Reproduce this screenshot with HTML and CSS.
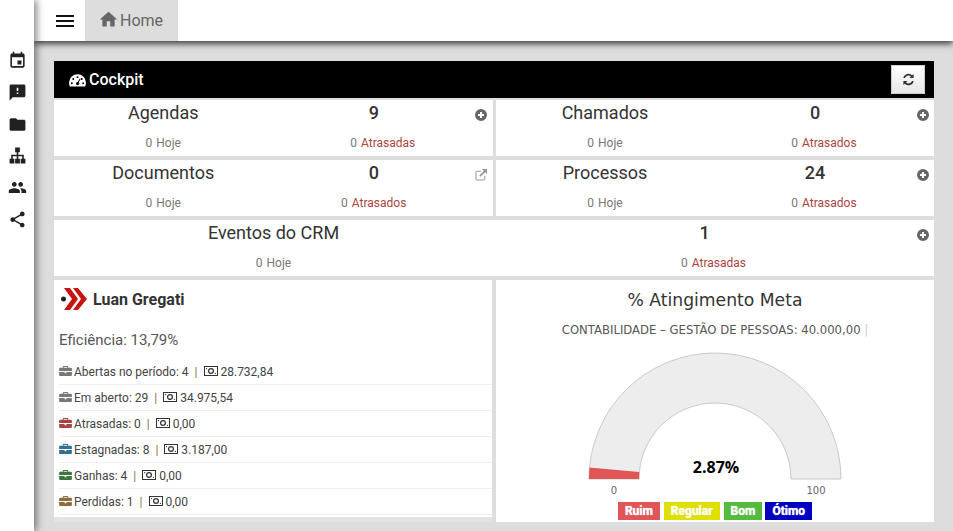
FILE: index.html
```html
<!DOCTYPE html>
<html lang="pt-BR">
<head>
    <meta charset="UTF-8">
    <meta name="viewport" content="width=device-width, initial-scale=1.0">
    <title>Cockpit</title>
    <link rel="stylesheet" href="styles.css">
</head>
<body>
    <svg class="defs" width="0" height="0">
        <symbol id="case" viewBox="0 0 14 11"><path d="M5 0h4a1 1 0 0 1 1 1v1h3a1 1 0 0 1 1 1v2.500H0V3a1 1 0 0 1 1-1h3V1a1 1 0 0 1 1-1zm0 1v1h4V1zM0 6.500h6V8h2V6.500h6V10a1 1 0 0 1-1 1H1a1 1 0 0 1-1-1z"/></symbol>
        <symbol id="money" viewBox="0 0 14 10"><path fill-rule="evenodd" d="M0 0h14v10H0zM1 1v8h12V1zM7 2a3 3 0 1 1 0 6 3 3 0 0 1 0-6zM7 3.200a1.800 1.800 0 1 0 0 3.600 1.800 1.800 0 0 0 0-3.600zM2 2h1.500L2 3.500zM12 8h-1.500L12 6.500z"/></symbol>
        <symbol id="plus" viewBox="0 0 12 12"><path fill-rule="evenodd" d="M6 0a6 6 0 1 1 0 12A6 6 0 0 1 6 0zM5 3v2H3v2h2v2h2V7h2V5H7V3z"/></symbol>
    </svg>

    <aside class="sidebar">
        <svg viewBox="0 0 24 24"><path d="M17 12h-5v5h5v-5zM16 1v2H8V1H6v2H5c-1.110 0-1.990.9-1.990 2L3 19c0 1.100.89 2 2 2h14c1.100 0 2-.9 2-2V5c0-1.100-.9-2-2-2h-1V1h-2zm3 18H5V8h14v11z"/></svg>
        <svg viewBox="0 0 24 24"><path d="M20 2H4c-1.100 0-1.990.9-1.990 2L2 22l4-4h14c1.100 0 2-.9 2-2V4c0-1.100-.9-2-2-2zm-7 12h-2v-2h2v2zm0-4h-2V6h2v4z"/></svg>
        <svg viewBox="0 0 24 24"><path d="M10 4H4c-1.100 0-1.990.9-1.990 2L2 18c0 1.100.9 2 2 2h16c1.100 0 2-.9 2-2V8c0-1.100-.9-2-2-2h-8l-2-2z"/></svg>
        <svg viewBox="0 0 24 24"><path d="M9 2h6v6h-2v3h7v5h2v6h-6v-6h2v-3h-5v3h2v6H9v-6h2v-3H6v3h2v6H2v-6h2v-5h7V8H9z"/></svg>
        <svg viewBox="0 0 24 24"><path d="M16 11c1.660 0 2.990-1.340 2.990-3S17.660 5 16 5c-1.660 0-3 1.340-3 3s1.340 3 3 3zm-8 0c1.660 0 2.990-1.340 2.990-3S9.660 5 8 5C6.340 5 5 6.340 5 8s1.340 3 3 3zm0 2c-2.330 0-7 1.170-7 3.500V19h14v-2.500c0-2.330-4.670-3.500-7-3.500zm8 0c-.29 0-.62.02-.97.05 1.160.84 1.970 1.970 1.970 3.450V19h6v-2.500c0-2.330-4.670-3.500-7-3.500z"/></svg>
        <svg viewBox="0 0 24 24"><path d="M18 16.080c-.76 0-1.440.3-1.960.77L8.910 12.700c.05-.23.09-.46.09-.7s-.04-.47-.09-.7l7.050-4.110c.54.5 1.250.81 2.040.81 1.660 0 3-1.340 3-3s-1.340-3-3-3-3 1.340-3 3c0 .24.04.47.09.7L8.040 9.810C7.500 9.310 6.790 9 6 9c-1.660 0-3 1.340-3 3s1.340 3 3 3c.79 0 1.500-.31 2.040-.81l7.120 4.160c-.05.21-.08.43-.08.65 0 1.610 1.310 2.920 2.920 2.920 1.610 0 2.920-1.310 2.920-2.920s-1.310-2.920-2.920-2.920z"/></svg>
    </aside>

    <div class="main">
        <header class="topbar">
            <div class="burger"><span></span><span></span><span></span></div>
            <div class="tab">
                <svg viewBox="0 0 24 24"><path d="M10 20v-6h4v6h5v-8h3L12 3 2 12h3v8z"/></svg>Home
            </div>
        </header>

        <main class="content">
            <div class="cockpit-head">
                <h1>
                    <svg viewBox="0 0 18 14"><path fill-rule="evenodd" d="M9 1a9 9 0 0 1 9 9c0 1.500-.4 2.900-1 4H1c-.6-1.100-1-2.500-1-4a9 9 0 0 1 9-9zM9 3a1 1 0 1 0 0 2 1 1 0 0 0 0-2zM4.500 5a1 1 0 1 0 0 2 1 1 0 0 0 0-2zM13.500 5a1 1 0 1 0 0 2 1 1 0 0 0 0-2zM3 9.500a1 1 0 1 0 0 2 1 1 0 0 0 0-2zM15 9.500a1 1 0 1 0 0 2 1 1 0 0 0 0-2zM11.500 5.500L9.300 9a1.700 1.700 0 1 0 1 .4l2-3.500z"/></svg>
                    Cockpit
                </h1>
                <button class="refresh">
                    <svg viewBox="0 0 14 14"><path d="M12.500 1v4.500H8l1.700-1.700A4 4 0 0 0 3.200 5.500H1.300A5.800 5.800 0 0 1 11 2.500zM1.500 13V8.500H6l-1.700 1.700a4 4 0 0 0 6.500-1.700h1.900A5.800 5.800 0 0 1 3 11.500z"/></svg>
                </button>
            </div>

            <div class="cards">
                <section class="card">
                    <div class="card-col"><div class="card-title">Agendas</div><div class="card-sub">0 Hoje</div></div>
                    <div class="card-col"><div class="card-num">9</div><div class="card-sub late shift">0 <span>Atrasadas</span></div></div>
                    <svg class="card-icon"><use href="#plus"/></svg>
                </section>
                <section class="card end">
                    <div class="card-col"><div class="card-title">Chamados</div><div class="card-sub">0 Hoje</div></div>
                    <div class="card-col"><div class="card-num">0</div><div class="card-sub late shift">0 <span>Atrasados</span></div></div>
                    <svg class="card-icon"><use href="#plus"/></svg>
                </section>
                <section class="card">
                    <div class="card-col"><div class="card-title">Documentos</div><div class="card-sub">0 Hoje</div></div>
                    <div class="card-col"><div class="card-num">0</div><div class="card-sub late">0 <span>Atrasados</span></div></div>
                    <svg class="card-icon ext" viewBox="0 0 14 14"><path d="M2.500 2H7v1.300H2.500a.8.8 0 0 0-.8.8v7.400c0 .4.4.8.8.8H10c.4 0 .8-.4.8-.8V8H12v3.500a2 2 0 0 1-2 2H2.500a2 2 0 0 1-2-2V4a2 2 0 0 1 2-2zM8 0h6v6l-2.200-2.200-5.300 5.300-1.600-1.600 5.300-5.300z"/></svg>
                </section>
                <section class="card end">
                    <div class="card-col"><div class="card-title">Processos</div><div class="card-sub">0 Hoje</div></div>
                    <div class="card-col"><div class="card-num">24</div><div class="card-sub late shift">0 <span>Atrasados</span></div></div>
                    <svg class="card-icon"><use href="#plus"/></svg>
                </section>
                <section class="card wide end">
                    <div class="card-col"><div class="card-title">Eventos do CRM</div><div class="card-sub">0 Hoje</div></div>
                    <div class="card-col"><div class="card-num">1</div><div class="card-sub late shift">0 <span>Atrasadas</span></div></div>
                    <svg class="card-icon"><use href="#plus"/></svg>
                </section>

                <section class="panel user">
                    <div class="user-name">
                        <svg viewBox="0 0 26 22"><circle cx="2.500" cy="11" r="2.500" fill="#222"/><path fill="#c8140f" d="M3 0h6l8 11-8 11H3l8-11zM12 0h5l9 11-9 11h-5l8-11z"/></svg>
                        Luan Gregati
                    </div>
                    <div class="efficiency">Eficiência: 13,79%</div>
                    <ul class="stats">
                        <li><svg class="case grey"><use href="#case"/></svg>Abertas no período: 4 <i>|</i> <svg class="money"><use href="#money"/></svg> 28.732,84</li>
                        <li><svg class="case grey"><use href="#case"/></svg>Em aberto: 29 <i>|</i> <svg class="money"><use href="#money"/></svg> 34.975,54</li>
                        <li><svg class="case red"><use href="#case"/></svg>Atrasadas: 0 <i>|</i> <svg class="money"><use href="#money"/></svg> 0,00</li>
                        <li><svg class="case blue"><use href="#case"/></svg>Estagnadas: 8 <i>|</i> <svg class="money"><use href="#money"/></svg> 3.187,00</li>
                        <li><svg class="case green"><use href="#case"/></svg>Ganhas: 4 <i>|</i> <svg class="money"><use href="#money"/></svg> 0,00</li>
                        <li><svg class="case brown"><use href="#case"/></svg>Perdidas: 1 <i>|</i> <svg class="money"><use href="#money"/></svg> 0,00</li>
                    </ul>
                </section>

                <section class="panel goal">
                    <h2>% Atingimento Meta</h2>
                    <p class="goal-sub">CONTABILIDADE – GESTÃO DE PESSOAS: 40.000,00 <span>|</span></p>
                    <svg class="gauge" viewBox="0 0 270 147" width="270" height="147">
                        <path d="M9 130A126 126 0 0 1 261 130H211A76 76 0 0 0 59 130z" fill="#ededed" stroke="#c9c9c9"/>
                        <path d="M9 130A126 126 0 0 1 9.500 118.600L59.300 123.100A76 76 0 0 0 59 130z" fill="#e05555"/>
                        <path d="M251 130h10" stroke="#cfe0f0"/>
                        <text class="gauge-val" x="136" y="124">2.87%</text>
                        <text class="gauge-lim" x="34" y="145">0</text>
                        <text class="gauge-lim" x="236" y="145">100</text>
                    </svg>
                    <div class="legend">
                        <span class="ruim">Ruim</span><span class="regular">Regular</span><span class="bom">Bom</span><span class="otimo">Ótimo</span>
                    </div>
                </section>
            </div>
        </main>
    </div>
</body>
</html>
```

FILE: styles.css
```css
* { box-sizing: border-box; }
html, body { height: 100%; }
body { margin: 0; display: flex; height: 531px; overflow: hidden; font-family: Roboto, sans-serif; color: #333; background: #ddd; }
.defs { position: absolute; }

.sidebar { width: 34px; flex: none; background: #fff; padding-top: 51px; display: flex; flex-direction: column; align-items: center; gap: 12.800px; box-shadow: 3px 0 7px rgba(0,0,0,.45); z-index: 2; }
.sidebar svg { width: 19px; height: 19px; fill: #212121; }

.main { flex: 1; min-width: 0; display: flex; flex-direction: column; }
.topbar { height: 41px; flex: none; background: #fff; display: flex; box-shadow: 0 3px 6px rgba(0,0,0,.7); z-index: 1; }
.burger { width: 51px; display: flex; flex-direction: column; gap: 3px; justify-content: center; padding-left: 22px; }
.burger span { width: 18px; height: 2px; background: #111; }
.tab { width: 93px; background: #ddd; color: #666; font-size: 16px; display: flex; align-items: center; padding-left: 14px; }
.tab svg { width: 21px; height: 21px; fill: #666; margin-right: 1px; margin-top: -3px; margin-left: -1px; }

.content { padding: 20px 19px 0 20px; }
.cockpit-head { height: 37px; background: #000; color: #fff; display: flex; align-items: center; justify-content: space-between; padding: 0 9px 0 15px; margin-bottom: 2px; }
.cockpit-head h1 { margin: 0; font-size: 16px; font-weight: 500; display: flex; align-items: center; gap: 3px; }
.cockpit-head h1 svg { width: 17px; height: 14px; fill: #fff; }
.refresh { width: 34px; height: 29px; padding: 0; background: linear-gradient(#fff, #e6e6e6); border: 1px solid #ccc; display: flex; align-items: center; justify-content: center; }
.refresh svg { width: 13px; height: 13px; fill: #333; }

.cards { display: grid; grid-template-columns: 439px 438px; gap: 4px 3px; }
.card { position: relative; height: 56px; background: #fff; display: grid; grid-template-columns: 1fr 1fr; padding: 1px 14px 0 4px; }
.card.wide { grid-column: 1 / 3; }
.card-col { text-align: center; }
.card-title { font-size: 18px; line-height: 24px; color: #333; }
.card-num { font-size: 18px; line-height: 24px; font-weight: 500; }
.card-sub { font-size: 12px; line-height: 14px; margin-top: 11px; color: #777; word-spacing: 1px; }
.late { color: #777; }
.late span { color: #a94442; }
.shift { padding-left: 18px; }
.card-icon { position: absolute; right: 6px; top: 9px; width: 12px; height: 12px; fill: #666; }
.end .card-icon { right: 5px; }
.card-icon.ext { fill: #999; }

.panel { background: #fff; height: 242px; }
.user { height: 237px; width: 438px; padding: 0 0 0 5px; box-shadow: 0 5px 0 #e3e3e3; }
.user-name { display: flex; align-items: center; gap: 6px; font-size: 16px; font-weight: 700; height: 38px; padding-left: 2px; }
.user-name svg { width: 26px; height: 22px; }
.efficiency { font-size: 15px; line-height: 18px; margin-top: 13px; color: #555; }
.stats { list-style: none; margin: 10px 0 0; padding: 0; }
.stats li { height: 26px; border-bottom: 1px solid #eee; font-size: 12px; display: flex; align-items: center; white-space: pre; color: #444; }
.stats i { font-style: normal; margin: 0 5px 0 3px; color: #8a6d3b; }
.case { width: 13px; height: 10px; margin-right: 2px; margin-top: -2px; }
.money { width: 14px; height: 10px; fill: #333; margin: -1px 0 0 1px; }
.grey { fill: #777; }
.red { fill: #a94442; }
.blue { fill: #31708f; }
.green { fill: #3c763d; }
.brown { fill: #8a6d3b; }

.goal { display: flex; flex-direction: column; align-items: center; }
.goal h2 { margin: 9px 0 0; font-size: 17.200px; line-height: 22px; font-weight: 400; font-family: "DejaVu Sans", sans-serif; color: #333; }
.goal-sub { margin: 11px 0 0; font-size: 11.650px; line-height: 16px; font-family: "DejaVu Sans", sans-serif; color: #555; }
.goal-sub span { color: #bcd; }
.gauge { margin-top: 11px; display: block; flex: none; }
.gauge-val { font: 700 16px "Open Sans", sans-serif; fill: #000; text-anchor: middle; }
.gauge-lim { font: 10px "DejaVu Sans", sans-serif; fill: #666; text-anchor: middle; }
.legend { display: flex; gap: 4px; margin-top: 6px; }
.legend span { height: 18px; line-height: 18px; padding: 0 7px; color: #fff; font-size: 12px; font-weight: 700; text-shadow: 0 0 1px #fff; }
.ruim { background: #e05555; }
.regular { background: #dfdf00; }
.bom { background: #55bb3f; }
.legend .otimo { background: #0000c0; margin-left: -1px; }
```
